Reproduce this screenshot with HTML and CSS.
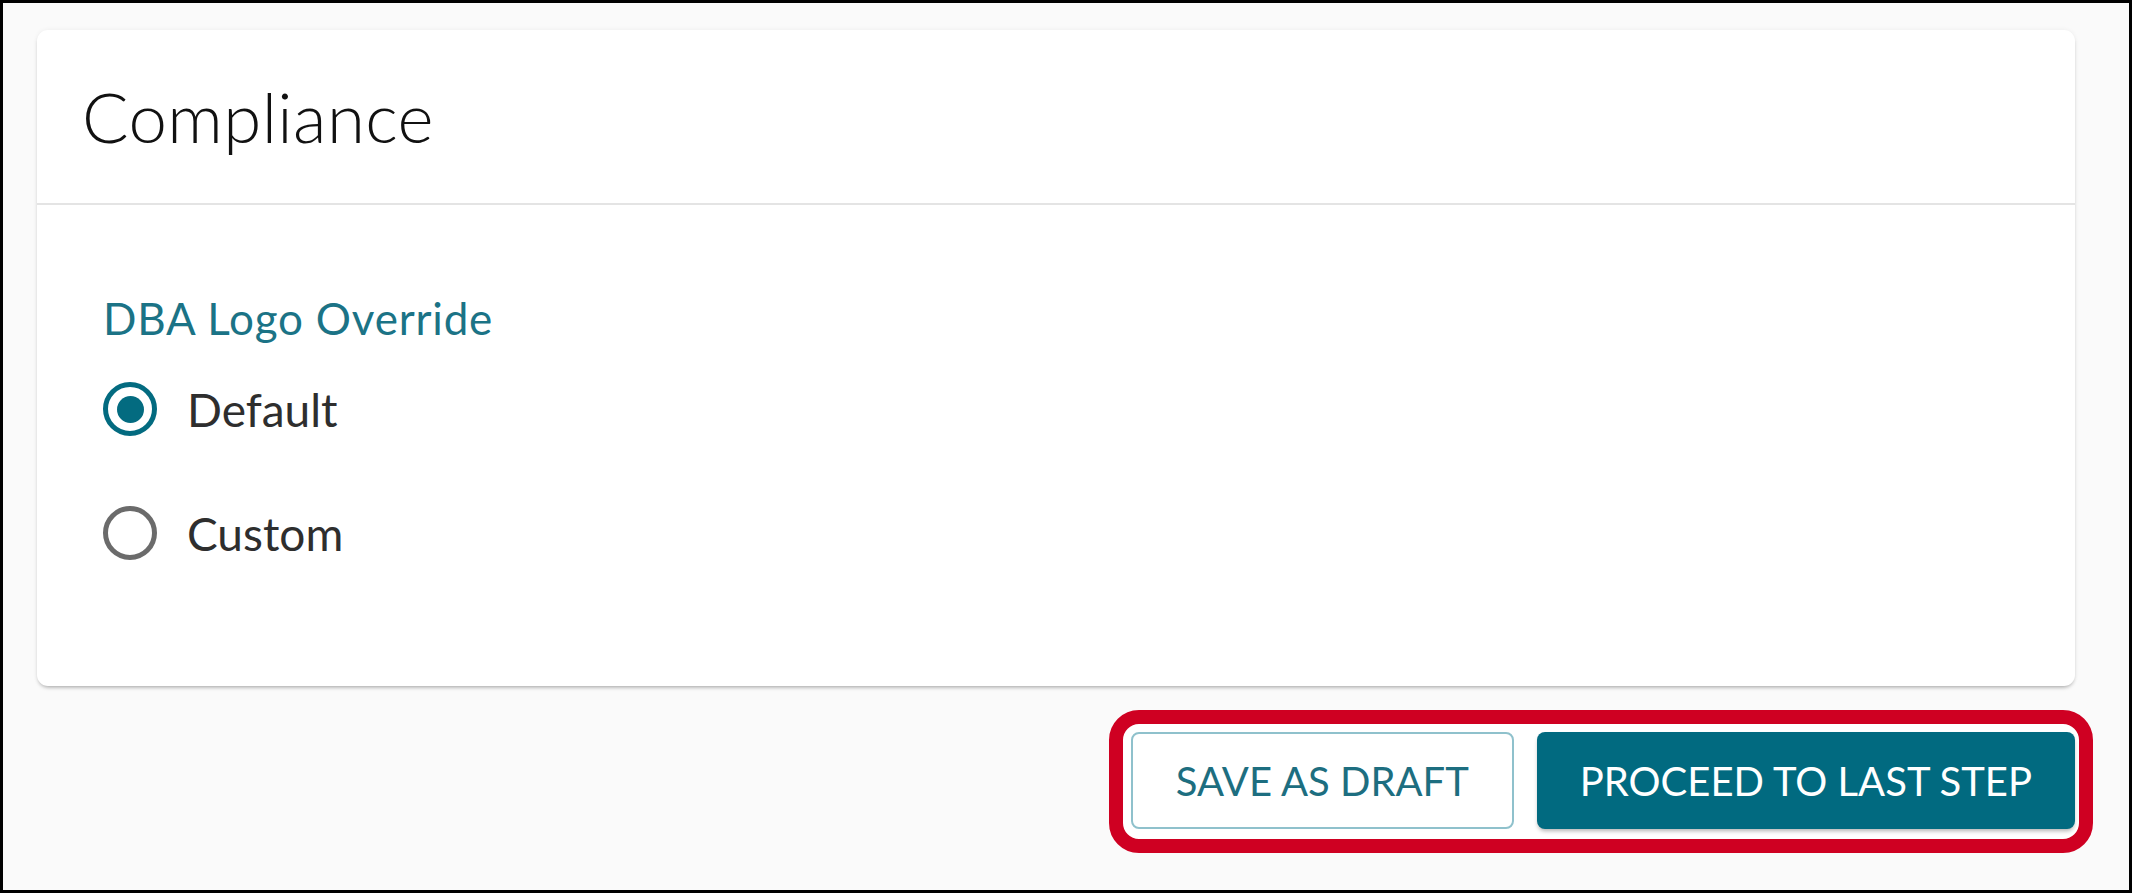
FILE: index.html
```html
<!DOCTYPE html>
<html lang="en">
<head>
<meta charset="utf-8">
<title>Compliance</title>
<link rel="stylesheet" href="styles.css">
</head>
<body>
<div class="frame">
  <section class="card">
    <header class="card-header">
      <h1 class="card-title">Compliance</h1>
    </header>
    <div class="card-body">
      <div class="field-label">DBA Logo Override</div>
      <div class="radio-group">
        <label class="radio-row">
          <span class="radio radio-checked"><span class="radio-dot"></span></span>
          <span class="radio-text">Default</span>
        </label>
        <label class="radio-row">
          <span class="radio"></span>
          <span class="radio-text">Custom</span>
        </label>
      </div>
    </div>
  </section>
  <div class="actions">
    <div class="highlight">
      <button class="btn btn-outline" type="button">SAVE AS DRAFT</button>
      <button class="btn btn-primary" type="button">PROCEED TO LAST STEP</button>
    </div>
  </div>
</div>
</body>
</html>
```
FILE: styles.css
```css
html, body {
  margin: 0;
  padding: 0;
  background: #ffffff;
}

body {
  font-family: Lato, "Noto Sans", "Liberation Sans", sans-serif;
}

.frame {
  box-sizing: border-box;
  width: 2132px;
  height: 893px;
  border: 3px solid #000000;
  background: #fafafa;
  padding: 27px 54px 0 34px;
  display: flex;
  flex-direction: column;
}

.card {
  background: #ffffff;
  border-radius: 11px;
  box-shadow: 0 3px 4px -2px rgba(0, 0, 0, 0.35), 0 0 5px rgba(0, 0, 0, 0.06);
  height: 656px;
  display: flex;
  flex-direction: column;
}

.card-header {
  height: 175px;
  box-sizing: border-box;
  border-bottom: 2px solid #e4e4e4;
  display: flex;
  align-items: center;
  padding-left: 45px;
}

.card-title {
  margin: 0;
  font-size: 69px;
  font-weight: 300;
  color: #111111;
  line-height: 1;
  letter-spacing: 0.4px;
}

.card-body {
  padding: 86px 0 0 66px;
}

.field-label {
  font-size: 44px;
  line-height: 54px;
  letter-spacing: 0.8px;
  color: #1b7386;
}

.radio-group {
  display: flex;
  flex-direction: column;
  padding-top: 2px;
}

.radio-row {
  height: 124px;
  display: flex;
  align-items: center;
  gap: 30px;
}

.radio {
  box-sizing: border-box;
  width: 54px;
  height: 54px;
  border-radius: 50%;
  border: 5px solid #6b6b6b;
  display: flex;
  align-items: center;
  justify-content: center;
}

.radio-checked {
  border-color: #036b80;
}

.radio-dot {
  width: 27px;
  height: 27px;
  border-radius: 50%;
  background: #036b80;
}

.radio-text {
  font-size: 46px;
  color: #2e2e2e;
}

.actions {
  display: flex;
  justify-content: flex-end;
  margin-top: 24px;
}

.highlight {
  display: flex;
  gap: 23px;
  background: #ffffff;
  border: 14px solid #cf0022;
  border-radius: 30px;
  padding: 8px 4px 10px 8px;
  margin-right: -18px;
}

.btn {
  font-family: Lato, "Noto Sans", "Liberation Sans", sans-serif;
  font-size: 40px;
  height: 97px;
  border-radius: 8px;
  padding: 0 43px;
  cursor: pointer;
}

.btn-outline {
  background: #ffffff;
  color: #1d6e80;
  border: 2px solid #8fc1cc;
}

.btn-primary {
  background: #016a80;
  color: #ffffff;
  border: none;
  box-shadow: 0 3px 4px -1px rgba(0, 0, 0, 0.3);
}
```
